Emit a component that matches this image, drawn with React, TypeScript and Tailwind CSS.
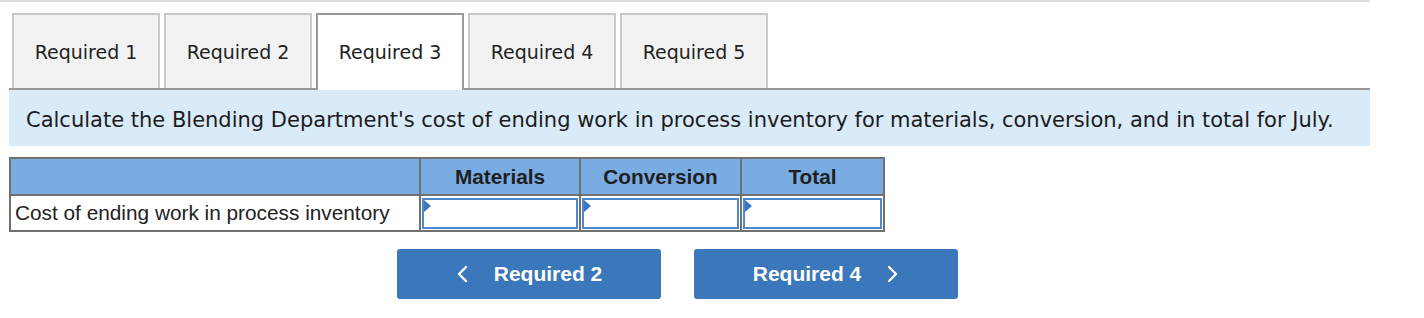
import React from "react";

const tabs = ["Required 1", "Required 2", "Required 3", "Required 4", "Required 5"];

function Chevron({ dir }: { dir: "left" | "right" }) {
  return (
    <svg width="12" height="18" viewBox="0 0 12 18" fill="none">
      <polyline
        points={dir === "left" ? "10,2 3,9 10,16" : "2,2 9,9 2,16"}
        stroke="white"
        strokeWidth="2.4"
        strokeLinecap="round"
        strokeLinejoin="round"
      />
    </svg>
  );
}

function InputCell() {
  return (
    <td className="border-2 border-[#707070] p-0">
      <div className="relative m-px h-[31px] border-2 border-[#4d89cc] bg-white">
        <span className="absolute left-0 top-0 h-0 w-0 border-y-[6px] border-l-[7px] border-y-transparent border-l-[#3a76c0]" />
      </div>
    </td>
  );
}

export default function App() {
  return (
    <div className="w-[1370px] bg-white">
      <div className="h-[2px] bg-[#dedede]" />

      <div className="ml-[9px] mt-[11px] flex items-end gap-[4px] border-b-2 border-[#999] pl-[3px] font-['DejaVu_Sans',Verdana,sans-serif] text-[19px] text-[#222]">
        {tabs.map((t, i) =>
          i === 2 ? (
            <div
              key={t}
              className="relative -mb-[2px] flex h-[77px] w-[148px] items-center justify-center border-2 border-b-0 border-[#999] bg-white pb-[1px]"
            >
              {t}
            </div>
          ) : (
            <div
              key={t}
              className="flex h-[75px] w-[148px] items-center justify-center border-2 border-b-0 border-[#c8c8c8] bg-[#f2f2f2] pt-[1px]"
            >
              {t}
            </div>
          )
        )}
      </div>

      <div className="ml-[9px] flex h-[56px] items-center bg-[#d9eaf8] pl-[17px] pt-[5px] font-['DejaVu_Sans',Verdana,sans-serif] text-[21px] text-[#1c1c1c]">
        Calculate the Blending Department's cost of ending work in process inventory for materials, conversion, and in total for July.
      </div>

      <table className="ml-[9px] mt-[11px] table-fixed border-collapse font-['Liberation_Sans',Arial,sans-serif] text-[20.8px]">
        <colgroup>
          <col className="w-[410px]" />
          <col className="w-[160px]" />
          <col className="w-[161px]" />
          <col className="w-[143px]" />
        </colgroup>
        <thead>
          <tr className="h-[37px] bg-[#78ace3] font-bold text-[#1f1f1f]">
            <th className="border-2 border-[#707070]" />
            <th className="border-2 border-[#707070] text-center">Materials</th>
            <th className="border-2 border-[#707070] text-center">Conversion</th>
            <th className="border-2 border-[#707070] text-center">Total</th>
          </tr>
        </thead>
        <tbody>
          <tr className="h-[36px] text-[#222]">
            <td className="border-2 border-[#707070] pl-[4px] text-left whitespace-nowrap">
              Cost of ending work in process inventory
            </td>
            <InputCell />
            <InputCell />
            <InputCell />
          </tr>
        </tbody>
      </table>

      <div className="ml-[397px] mt-[17px] flex gap-[33px] pb-[19px] font-['Liberation_Sans',Arial,sans-serif] text-[21px] font-bold text-white">
        <button className="flex h-[50px] w-[264px] items-center justify-center gap-[26px] rounded-[3px] bg-[#3a77bb]">
          <Chevron dir="left" />
          <span>Required 2</span>
        </button>
        <button className="flex h-[50px] w-[264px] items-center justify-center gap-[26px] rounded-[3px] bg-[#3a77bb]">
          <span>Required 4</span>
          <Chevron dir="right" />
        </button>
      </div>
    </div>
  );
}
